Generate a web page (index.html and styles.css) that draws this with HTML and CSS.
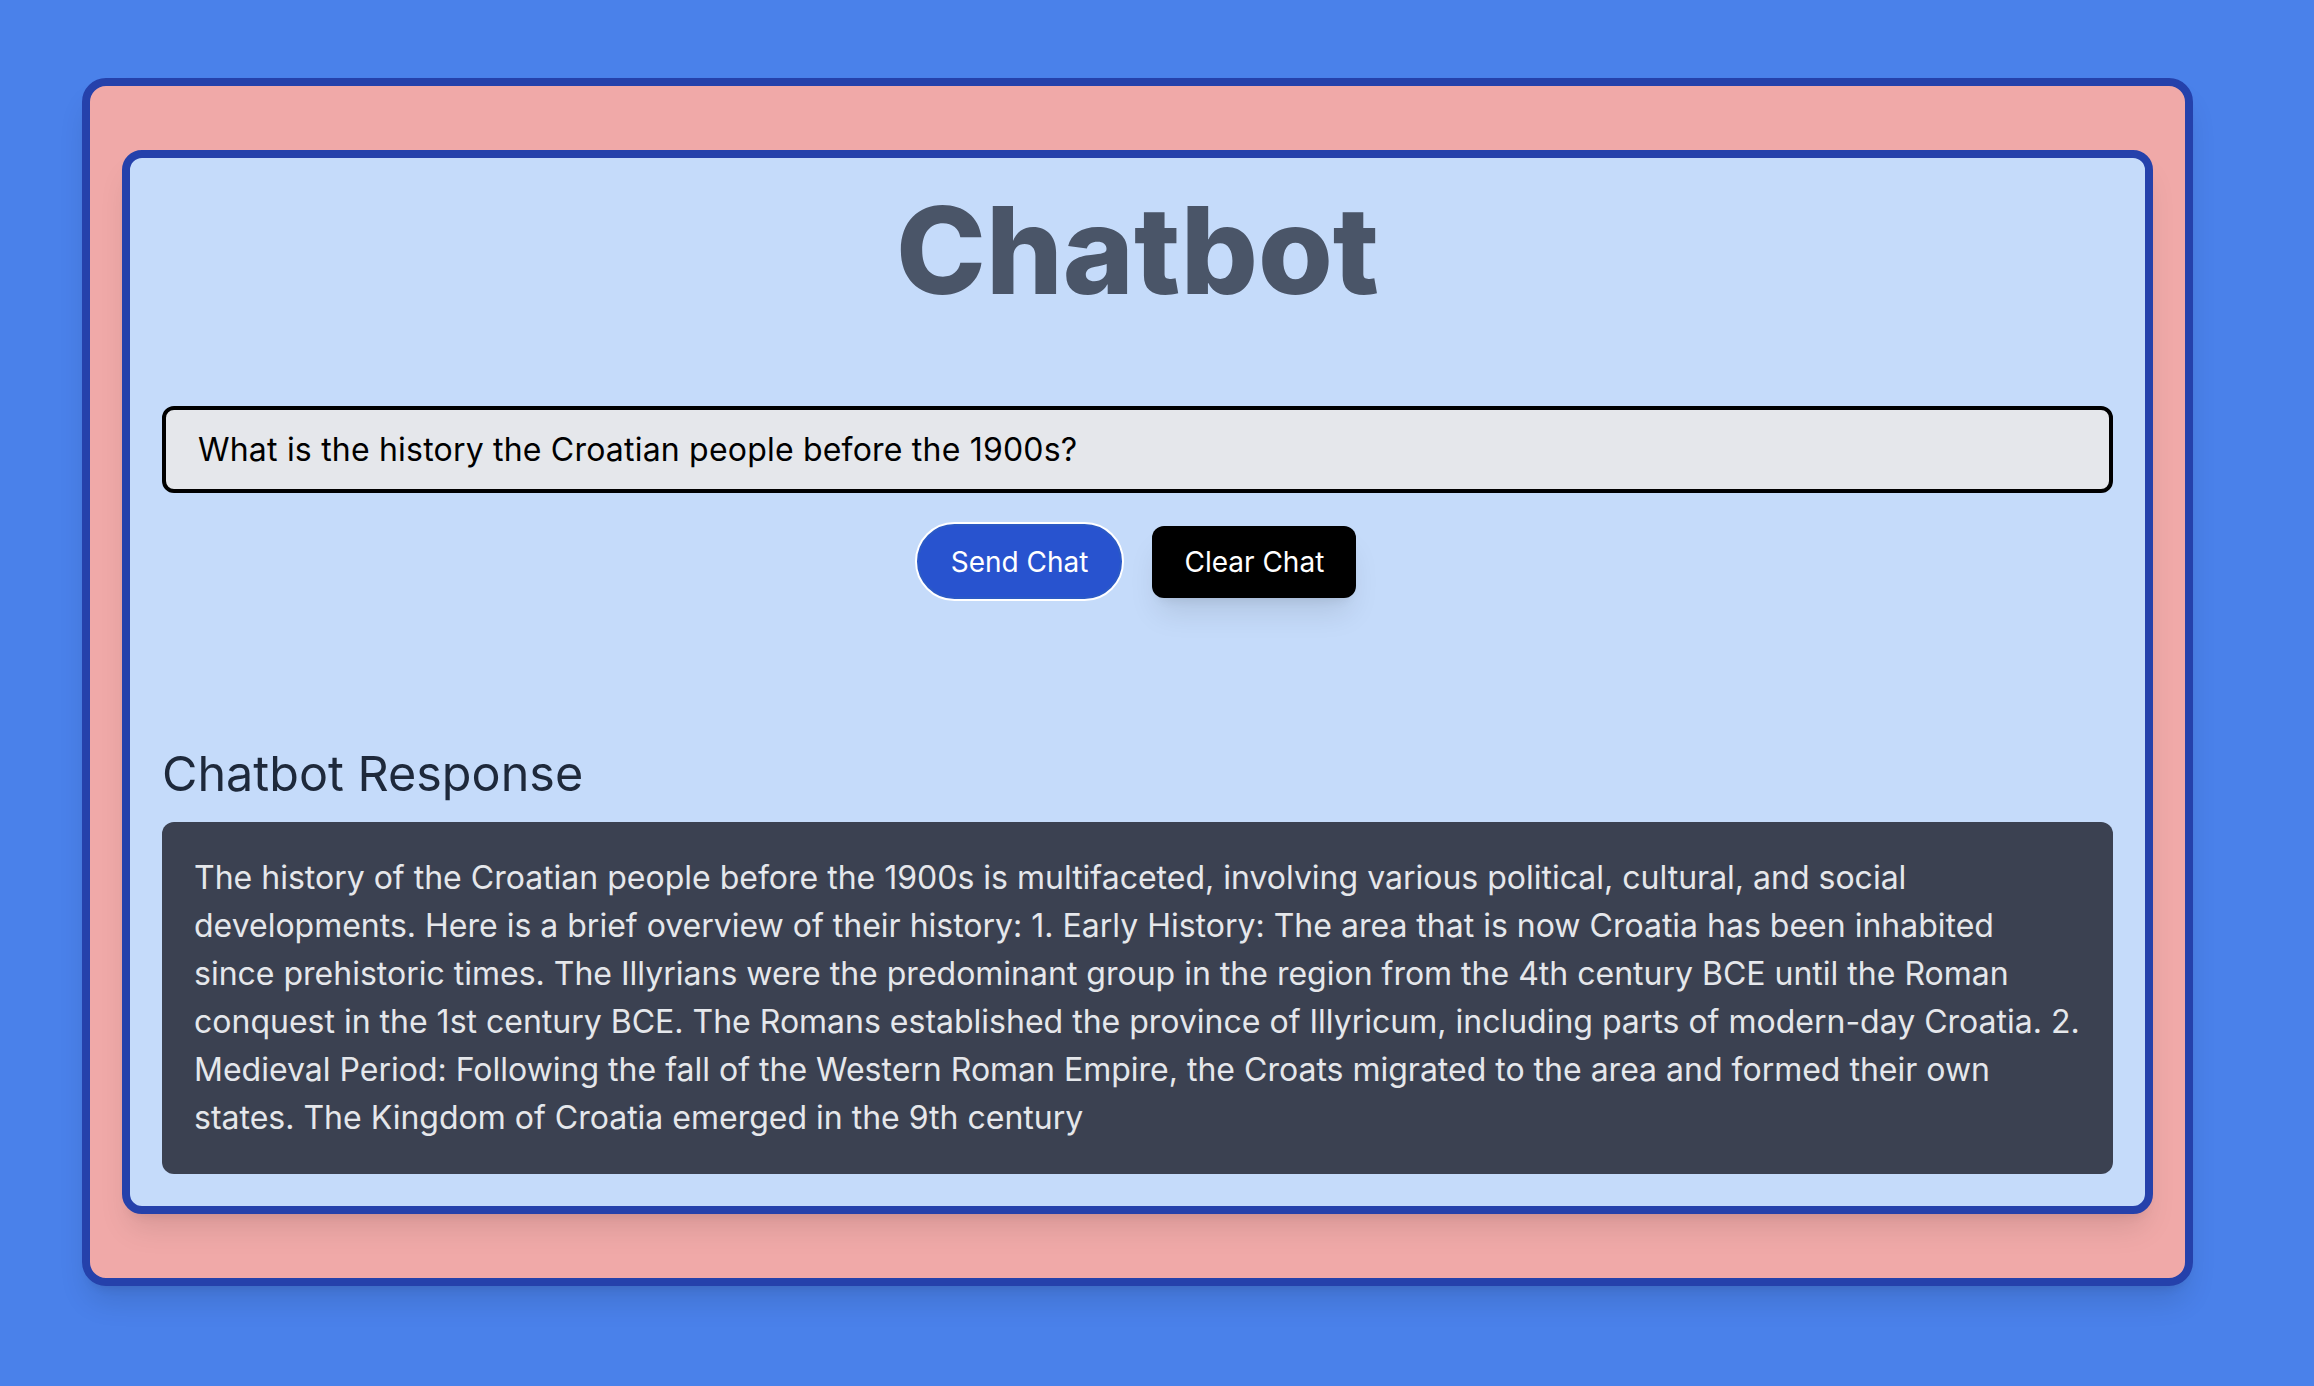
FILE: index.html
```html
<!DOCTYPE html>
<html lang="en">
<head>
<meta charset="utf-8">
<title>Chatbot</title>
<link rel="stylesheet" href="styles.css">
</head>
<body>
<div class="page">
  <div class="outer">
    <div class="inner">
      <h1 class="title">Chatbot</h1>
      <input class="prompt" type="text" value="What is the history the Croatian people before the 1900s?">
      <div class="actions">
        <button class="btn btn-send">Send Chat</button>
        <button class="btn btn-clear">Clear Chat</button>
      </div>
      <h2 class="resp-title">Chatbot Response</h2>
      <div class="resp-box">The history of the Croatian people before the 1900s is multifaceted, involving various political, cultural, and social developments. Here is a brief overview of their history: 1. Early History: The area that is now Croatia has been inhabited since prehistoric times. The Illyrians were the predominant group in the region from the 4th century BCE until the Roman conquest in the 1st century BCE. The Romans established the province of Illyricum, including parts of modern-day Croatia. 2. Medieval Period: Following the fall of the Western Roman Empire, the Croats migrated to the area and formed their own states. The Kingdom of Croatia emerged in the 9th century</div>
    </div>
  </div>
</div>
</body>
</html>
```

FILE: styles.css
```css
html, body {
  margin: 0;
  padding: 0;
}
body {
  background: #4a81ea;
  font-family: Inter, "Noto Sans", "Liberation Sans", sans-serif;
  min-height: 1386px;
}
.page {
  padding: 78px 0 0 82px;
}
.outer {
  width: 2111px;
  box-sizing: border-box;
  border: 8px solid #2541ab;
  border-radius: 24px;
  background: #f0a9a8;
  padding: 64px 32px;
  box-shadow: 0 20px 30px -6px rgba(0,0,0,0.12), 0 8px 12px -8px rgba(0,0,0,0.12);
}
.inner {
  border: 8px solid #2541ab;
  border-radius: 20px;
  background: #c5dbfa;
  padding: 32px;
  box-shadow: 0 20px 30px -6px rgba(0,0,0,0.1), 0 8px 12px -8px rgba(0,0,0,0.1);
}
.title {
  margin: 0;
  font-size: 121px;
  line-height: 120px;
  font-weight: 800;
  text-align: center;
  color: #4a5568;
}
.prompt {
  display: block;
  width: 100%;
  box-sizing: border-box;
  height: 87px;
  margin: 96px 0 0 0;
  padding: 0 32px;
  border: 4px solid #000;
  border-radius: 12px;
  background: #e5e7eb;
  font-family: Inter, "Noto Sans", sans-serif;
  font-size: 32px;
  letter-spacing: 0.2px;
  color: #000;
  outline: none;
}
.actions {
  display: flex;
  justify-content: center;
  align-items: center;
  gap: 28px;
  margin-top: 29px;
  padding-right: 4px;
}
.btn {
  font-family: Inter, "Noto Sans", sans-serif;
  font-size: 28px;
  line-height: 40px;
  color: #fff;
  cursor: pointer;
}
.btn-send {
  background: #2853cf;
  border: 2px solid #fff;
  border-radius: 999px;
  padding: 17.5px 34px;
  box-shadow: inset 0 0 0 2px #2b5ac6;
}
.btn-clear {
  background: #000;
  border: none;
  border-radius: 12px;
  padding: 16px 32px;
  box-shadow: 0 20px 30px -6px rgba(0,0,0,0.1), 0 8px 12px -8px rgba(0,0,0,0.1);
}
.resp-title {
  margin: 141px 0 16px 0;
  font-size: 48.5px;
  line-height: 64px;
  font-weight: 400;
  color: #1e293b;
}
.resp-box {
  background: #3b4151;
  border-radius: 12px;
  padding: 32px;
  font-size: 32px;
  line-height: 48px;
  color: #e5e7eb;
}
```
